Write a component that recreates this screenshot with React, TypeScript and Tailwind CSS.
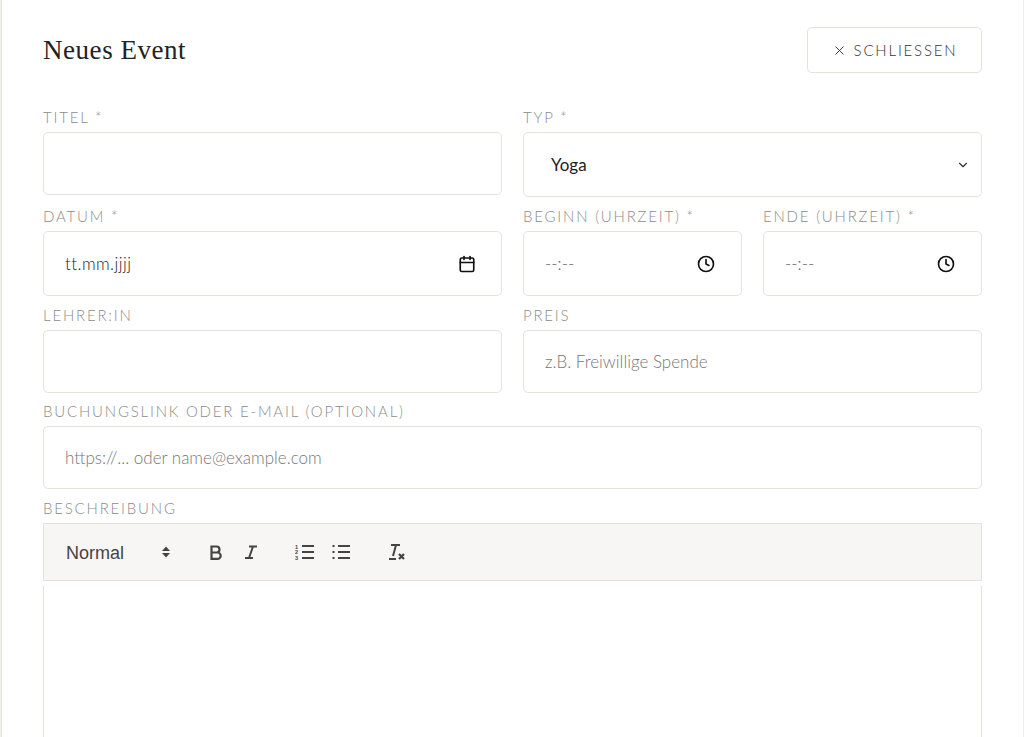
import { X, Calendar, Clock, ChevronDown } from "lucide-react";

const sans = { fontFamily: "Lato, 'Open Sans', sans-serif" };

const Label = ({ children }: { children: React.ReactNode }) => (
  <div className="h-[14px] mb-[8px] text-[15px] leading-[14px] font-light tracking-[0.12em] text-[#8c8c8c] uppercase whitespace-nowrap">
    {children}
  </div>
);

const Box = ({ children, h = "h-[63px]" }: { children?: React.ReactNode; h?: string }) => (
  <div className={`${h} border border-[#e6e3dc] rounded-[5px] bg-white flex items-center px-[21px] text-[17px] font-light`}>
    {children}
  </div>
);

export default function App() {
  return (
    <div className="w-[1024px] h-[737px] overflow-hidden bg-[#f1f0ec]" style={sans}>
      <div className="ml-[1px] mr-[1px] h-full bg-white border-l border-[#e3e1db] px-[41px] pt-[27px]">
        <div className="flex items-center justify-between h-[46px] mb-[37px]">
          <h1 className="text-[27px] text-[#222] tracking-[0.02em]" style={{ fontFamily: "'Liberation Serif', serif" }}>
            Neues Event
          </h1>
          <button className="h-[46px] w-[175px] border border-[#e3e1db] rounded-[5px] flex items-center justify-center gap-[7px] text-[15px] font-light tracking-[0.12em] text-[#333]">
            <X size={15} strokeWidth={1.5} />
            SCHLIESSEN
          </button>
        </div>

        <div className="grid grid-cols-2 gap-x-[21px] gap-y-[12px]">
          <div>
            <Label>Titel *</Label>
            <Box />
          </div>
          <div>
            <Label>Typ *</Label>
            <Box h="h-[65px]">
              <span className="pl-[6px] flex-1 text-[#222] font-normal">Yoga</span>
              <ChevronDown size={14} className="text-[#333] -mr-[10px]" />
            </Box>
          </div>
          <div>
            <Label>Datum *</Label>
            <Box h="h-[65px]">
              <span className="flex-1 text-[#222] tracking-wide">tt.mm.jjjj</span>
              <Calendar size={18} strokeWidth={2.2} className="text-[#111] mr-[4px]" />
            </Box>
          </div>
          <div className="grid grid-cols-2 gap-x-[21px]">
            <div>
              <Label>Beginn (Uhrzeit) *</Label>
              <Box h="h-[65px]">
                <span className="flex-1 text-[#666]">--:--</span>
                <Clock size={18} strokeWidth={2.2} className="text-[#111] mr-[5px]" />
              </Box>
            </div>
            <div>
              <Label>Ende (Uhrzeit) *</Label>
              <Box h="h-[65px]">
                <span className="flex-1 text-[#666]">--:--</span>
                <Clock size={18} strokeWidth={2.2} className="text-[#111] mr-[5px]" />
              </Box>
            </div>
          </div>
          <div>
            <Label>Lehrer:in</Label>
            <Box />
          </div>
          <div>
            <Label>Preis</Label>
            <Box>
              <span className="text-[#777]">z.B. Freiwillige Spende</span>
            </Box>
          </div>
          <div className="col-span-2 -mt-[1px]">
            <Label>Buchungslink oder E-Mail (optional)</Label>
            <Box>
              <span className="text-[#777]">https://... oder name@example.com</span>
            </Box>
          </div>
          <div className="col-span-2">
            <Label>Beschreibung</Label>
            <div className="h-[58px] border border-[#e3e1db] bg-[#f7f6f4] flex items-center pl-[22px] text-[#333]" style={{ fontFamily: "'Liberation Sans', Arial, sans-serif" }}>
              <span className="text-[18px] text-[#444] w-[95px] pt-[2px]">Normal</span>
              <svg width="10" height="14" viewBox="0 0 10 14" className="mr-[37px]">
                <path d="M1 6 L5 1.5 L9 6 Z M1 8 L5 12.5 L9 8 Z" fill="#444" />
              </svg>
              <svg width="16" height="16" viewBox="0 0 16 16" className="mr-[19px]">
                <path d="M3.5 2.5h5a3 3 0 0 1 0 6h-5zM3.5 8.5h6a3.2 3.2 0 0 1 0 6.4h-6z" fill="none" stroke="#444" strokeWidth="2.2" />
              </svg>
              <svg width="16" height="16" viewBox="0 0 16 16" className="mr-[36px]">
                <path d="M6 2.5h8M2 14h8M10 2.5L6 14" stroke="#444" strokeWidth="2" fill="none" />
              </svg>
              <svg width="20" height="18" viewBox="0 0 20 18" className="mr-[16px]">
                <path d="M7 3h12M7 9h12M7 15h12" stroke="#444" strokeWidth="2" />
                <text x="0" y="5.5" fontSize="5.5" fill="#444" fontWeight="bold">1</text>
                <text x="0" y="11" fontSize="5.5" fill="#444" fontWeight="bold">2</text>
                <text x="0" y="16.5" fontSize="5.5" fill="#444" fontWeight="bold">3</text>
              </svg>
              <svg width="20" height="18" viewBox="0 0 20 18" className="mr-[36px]">
                <path d="M7 3h12M7 9h12M7 15h12" stroke="#444" strokeWidth="2" />
                <path d="M1.5 3h2M1.5 9h2M1.5 15h2" stroke="#444" strokeWidth="2" />
              </svg>
              <svg width="20" height="18" viewBox="0 0 20 18">
                <path d="M4 2h9M9 2L6 13M2 16h7" stroke="#444" strokeWidth="2" fill="none" />
                <path d="M12 11l5 5M17 11l-5 5" stroke="#444" strokeWidth="2.2" />
              </svg>
            </div>
            <div className="mt-[5px] h-[200px] border-x border-[#e3e1db] bg-white" />
          </div>
        </div>
      </div>
    </div>
  );
}
